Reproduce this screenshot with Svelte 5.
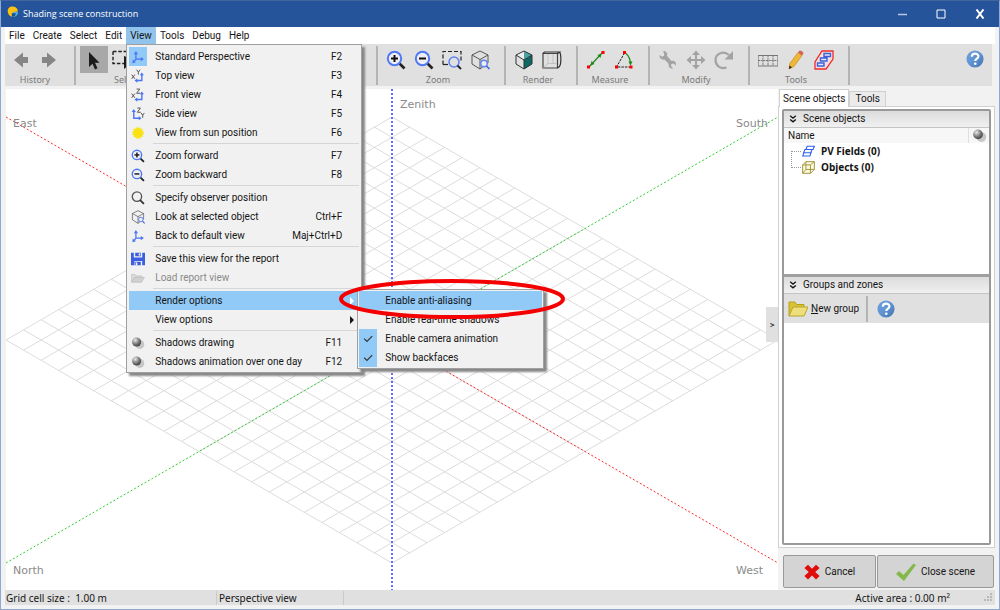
<script>
  const menuTitles = ['File', 'Create', 'Select', 'Edit', 'View', 'Tools', 'Debug', 'Help'];

  const viewMenu = [
    { label: 'Standard Perspective', key: 'F2', icon: 'axes', checked: true },
    { label: 'Top view', key: 'F3', icon: 'topView' },
    { label: 'Front view', key: 'F4', icon: 'frontView' },
    { label: 'Side view', key: 'F5', icon: 'sideView' },
    { label: 'View from sun position', key: 'F6', icon: 'sun' },
    null,
    { label: 'Zoom forward', key: 'F7', icon: 'zoomIn' },
    { label: 'Zoom backward', key: 'F8', icon: 'zoomOut' },
    null,
    { label: 'Specify observer position', icon: 'lens' },
    { label: 'Look at selected object', key: 'Ctrl+F', icon: 'cubeZoom' },
    { label: 'Back to default view', key: 'Maj+Ctrl+D', icon: 'axes' },
    null,
    { label: 'Save this view for the report', icon: 'disk' },
    { label: 'Load report view', icon: 'openGrey', disabled: true },
    null,
    { label: 'Render options', sub: true, active: true },
    { label: 'View options', sub: true },
    null,
    { label: 'Shadows drawing', key: 'F11', icon: 'ball' },
    { label: 'Shadows animation over one day', key: 'F12', icon: 'ball' }
  ];

  const renderMenu = [
    { label: 'Enable anti-aliasing', active: true },
    { label: 'Enable real-time shadows' },
    { label: 'Enable camera animation', checked: true, icon: 'check' },
    { label: 'Show backfaces', checked: true, icon: 'check' }
  ];

  const rightGroups = [
    { label: 'Zoom', tools: [['zoomIn', 'Zoom forward'], ['zoomOut', 'Zoom backward'], ['zoomArea', 'Zoom on area'], ['cubeZoom', 'Zoom on object']] },
    { label: 'Render', tools: [['cubeSolid', 'Solid rendering'], ['cubeWire', 'Wire rendering']] },
    { label: 'Measure', tools: [['distance', 'Distance'], ['angle', 'Angle']] },
    { label: 'Modify', tools: [['wrench', 'Edit'], ['move', 'Move'], ['rotate', 'Rotate']] },
    { label: 'Tools', tools: [['grid', 'Grid'], ['pencil', 'Draw'], ['zone', 'Zone']] }
  ];

  // Ground grid: 22 x 22 cells seen in isometric projection.
  const cells = 22;
  const cx = 386;
  const cy = 251;
  const hw = 386;
  const hh = 223;
  const gridLines = Array.from({ length: cells + 1 }, (_, i) => {
    const t = i / cells;
    return [
      { x1: cx - hw + hw * t, y1: cy - hh * t, x2: cx + hw * t, y2: cy + hh - hh * t },
      { x1: cx - hw + hw * t, y1: cy + hh * t, x2: cx + hw * t, y2: cy - hh + hh * t }
    ];
  }).flat();
</script>

{#snippet icon(name)}
  <svg class="icon" viewBox="0 0 20 20" fill="none" aria-hidden="true">
    {#if name === 'axes'}
      <path d="M7 4v9h9M7 13l-3 4" stroke="#4a76f5" stroke-width="1.8" />
      <path d="M4 6 7 1.500 10 6zM14 10l4.500 3-4.500 3zM2.500 13.500l4.500 4-5 1.500z" fill="#4a76f5" />
    {:else if name === 'topView' || name === 'frontView'}
      <path d="M7 16.500h8.500V8" stroke="#4a76f5" stroke-width="2" />
      <path d="M9 13.500 5 16.500l4 3zM12.500 9l3-4 3 4z" fill="#4a76f5" />
      <path d="m1 8 4.500 6M5.500 8 1 14" stroke="#555" stroke-width="1.400" />
      {#if name === 'topView'}
        <path d="m8 1 2.500 3.500L13 1M10.500 4.500V8" stroke="#555" stroke-width="1.400" />
      {:else}
        <path d="M8 1.500h4.500L8 7.500h5" stroke="#555" stroke-width="1.400" />
      {/if}
    {:else if name === 'sideView'}
      <path d="M4 6v10h8" stroke="#4a76f5" stroke-width="2" />
      <path d="m1 7 3-4 3 4zM11 13l4 3-4 3z" fill="#4a76f5" />
      <path d="M9 1.500h4.500L9 7.500h5M14.500 8.500l2.200 3.500L19 8.500M16.700 12v3.500" stroke="#555" stroke-width="1.400" />
    {:else if name === 'sun'}
      <circle cx="10" cy="10" r="7" fill="#f9e211" />
      <circle cx="10" cy="10" r="7.500" stroke="#f9e211" stroke-width="1.600" stroke-dasharray="2.400 1.500" />
    {:else if name === 'zoomIn' || name === 'zoomOut'}
      <path d="m13 13 5.500 5.500" stroke="#222" stroke-width="2.600" />
      <circle cx="8.500" cy="8.500" r="6.700" stroke="#4f78f3" stroke-width="2" fill="#eeeef4" />
      <path d="M5 8.500h7" stroke="#111" stroke-width="2" />
      {#if name === 'zoomIn'}<path d="M8.500 5v7" stroke="#111" stroke-width="2" />{/if}
    {:else if name === 'zoomArea'}
      <path d="M1 14.500V1.500h18v9" stroke="#222" stroke-width="1.200" stroke-dasharray="4 2" />
      <path d="M1 14.500h5" stroke="#222" stroke-width="1.200" />
      <circle cx="12" cy="12" r="5" stroke="#5f84f3" stroke-width="1.500" />
      <path d="m15.500 15.500 3.500 3.500" stroke="#222" stroke-width="1.800" />
    {:else if name === 'lens'}
      <circle cx="8.500" cy="8" r="6.700" stroke="#555" stroke-width="1.900" />
      <path d="m13 13 5.500 5.500" stroke="#333" stroke-width="2.600" />
    {:else if name === 'cubeZoom'}
      <path d="m10 1 8 4v8l-8 6-8-5V5zM2 5l8 4.500L18 5M10 9.500V19" stroke="#555" stroke-width="1" />
      <circle cx="14" cy="13.500" r="3.200" stroke="#5f84f3" stroke-width="1.400" fill="#eee" />
      <path d="m16.500 16 3 3" stroke="#3c5fcf" stroke-width="1.500" />
    {:else if name === 'cubeSolid'}
      <path d="m10 1 8 4-8 5z" fill="#4aa3a0" />
      <path d="m18 5v9l-8 5V10z" fill="#0b6864" />
      <path d="M10 1 2 5l8 5V1z" fill="#eee" />
      <path d="m10 1 8 4v9l-8 5-8-5V5zM2 5l8 5 8-5M10 10v9" stroke="#333" stroke-width="1" />
    {:else if name === 'cubeWire'}
      <path d="M1 3.500h14.500V18H1z" stroke="#444" stroke-width="1.200" />
      <path d="m1 3.500 1.500-1.500h15l-2 1.500M17.500 2c1.800 2 1.800 12 0 14.500L15.500 18" stroke="#333" stroke-width="1.200" />
      <path d="M6 4v9.500h9M1.500 17.500 6 13.500M11 4v9.500" stroke="#c2c2c2" />
    {:else if name === 'distance'}
      <path d="m3 17 14-15" stroke="#178a17" stroke-width="1.200" />
      <path d="m5.500 11 3 3-4 1.500zM14.500 8l-3-3 4-1.500z" fill="#178a17" />
      <path d="M1 15.500h3v3H1zM15.500 1h3v3h-3z" fill="#f00" />
    {:else if name === 'angle'}
      <path d="M10.500 3 2.500 17h14" stroke="#222" stroke-dasharray="2.500 1" />
      <path d="M12 3.500c3.500 3 4.500 7 4.500 11" stroke="#178a17" stroke-width="1.200" />
      <path d="m14.500 11.500 2 4 2-4z" fill="#178a17" />
      <path d="M9 1h3v3H9zM1 15.500h3v3H1zM15.500 15.500h3v3h-3z" fill="#f00" />
    {:else if name === 'wrench'}
      <path d="M5 1c3-.5 5 2 4 5l4.500 5c3-1 5 1.500 4.500 4.500l-2.500-2-2.300.8v2.300l2.200 1.900c-3 .5-5.500-1.500-4.600-4.500L6.500 9.500C3.500 10.300 1 8 1.500 5l2.500 1.700 2.100-.9V3.500z" fill="#a3a3a3" />
    {:else if name === 'move'}
      <path d="M10 3v14M3 10h14" stroke="#a3a3a3" stroke-width="2" />
      <path d="m6 5 4-4.500L14 5zM6 15l4 4.500 4-4.500zM5 6 .5 10 5 14zM15 6l4.500 4-4.500 4z" fill="#a3a3a3" />
    {:else if name === 'rotate'}
      <path d="M12.500 17.500C6.500 19.500 1.500 15.500 1.500 10 1.500 3 10 .5 15 5" stroke="#a3a3a3" stroke-width="2.200" />
      <path d="M19 1v8.500h-8.500z" fill="#a3a3a3" />
    {:else if name === 'grid'}
      <path d="M0 5.500h20v10.500H0z" stroke="#777" stroke-width="1.200" />
      <path d="M0 10.500h20M5 5v11M10 5v11M15 5v11" stroke="#777" stroke-dasharray="2 .7" />
    {:else if name === 'pencil'}
      <path d="m3 19 .8-5.500L12 2.500l4 3L8 16.500z" fill="#eeb73a" stroke="#c78a20" stroke-width=".7" />
      <path d="m12 2.500 1.500-2c2 0 3.500 1 4 3L16 5.500z" fill="#d6634f" />
      <path d="m3 19 .5-3.500 2.500 1.700z" fill="#222" />
    {:else if name === 'zone'}
      <path d="M8 1h11v8l-7 10H1v-7z" fill="#f6dede" stroke="#ee2b2b" stroke-width="1.300" />
      <path d="M10 3.500h6.500v3H10zM6.500 8H13v3H6.500zM3.500 13H10v3H3.500z" fill="#e4e8fb" stroke="#3d61d8" stroke-width="1.400" />
    {:else if name === 'disk'}
      <path d="M0 1h4v7h12V1h4v18h-4v-6H5v6H0z" fill="#3b5fe0" />
      <path d="M6 1h8v5H6zM6 14h8v5H6z" fill="#3b5fe0" />
      <path d="M11 2h2v3h-2zM7 15h2v4H7z" fill="#fff" />
    {:else if name === 'openGrey'}
      <path d="M1 16V5h5l1.500 2H15v3" fill="#ddd" stroke="#bbb" />
      <path d="m1 16 4-7h14l-4 7z" fill="#d2d2d2" stroke="#b8b8b8" />
    {:else if name === 'folder'}
      <path d="M1 17V3h6l1.500 2.500H16V8" fill="#d9c233" stroke="#b59f1c" />
      <path d="M1 17 5 8h15l-4 9z" fill="#ede07c" stroke="#b8a52a" />
    {:else if name === 'ball'}
      <circle cx="12.500" cy="12" r="6.500" fill="#c6c6c6" />
      <circle cx="8" cy="8.500" r="6.500" fill="url(#ballShade)" />
    {:else if name === 'check'}
      <path d="m4.500 9.500 4 4 7.500-7.500" stroke="#333" stroke-width="1.700" />
    {:else if name === 'help'}
      <circle cx="10" cy="10" r="9.500" fill="url(#helpShade)" />
      <path d="M6.500 7.500C6.500 2.800 13.800 3 13.800 7.200c0 2.300-3.500 2.500-3.500 5" stroke="#fff" stroke-width="2.400" />
      <circle cx="10.300" cy="15.300" r="1.500" fill="#fff" />
    {:else if name === 'arrowLeft'}
      <path d="m3 10 9-7.500V7h5v6h-5v4.500z" fill="#868686" />
    {:else if name === 'arrowRight'}
      <path d="m17 10-9-7.500V7H3v6h5v4.500z" fill="#868686" />
    {:else if name === 'pointer'}
      <path d="M5 2v15l3.500-3.200 2.500 5.700 2.500-1.200-2.500-5.500h4.500z" fill="#1c1c1c" />
    {:else if name === 'rectSelect'}
      <path d="M1 1.500h18M1 1.500v12h11" stroke="#222" stroke-width="1.400" stroke-dasharray="3.500 1.800" />
      <path d="M12 6v13l3-2.500L17 20h3V9z" fill="#1c1c1c" />
    {:else if name === 'pv'}
      <path d="M8 2h11l-2 5H6zM4.500 7h11l-2 5h-11zM3 12h11l-2 5H1z" stroke="#2d62e8" stroke-width="1.700" fill="#fff" />
    {:else if name === 'box'}
      <path d="M1 6h12v13H1zM6 1h13v12H6zM1 6l5-5M13 6l6-5M13 19l6-6M1 19l5-6" stroke="#a4953a" stroke-width="1.500" fill="#f7f3c4" fill-opacity=".5" />
    {:else if name === 'chevrons'}
      <path d="m3 2 7 6 7-6M3 11l7 6 7-6" stroke="#111" stroke-width="3.400" />
    {:else if name === 'cross'}
      <path d="m5 1 5 5 5-5 4.500 4-5.500 5 5.500 5-4.500 4.500-5-5-5 5L.5 15 6 10 .5 5z" fill="#e00b0b" />
    {:else if name === 'tick'}
      <path d="m0 12 3-3 4.500 4L17.500 1.500 20 3 8 19z" fill="#84b84c" />
    {:else if name === 'logo'}
      <path d="M2 12C-1 6 4 0 10 1c5 .5 8 4 8 8l-8 1-2 8c-3-1-5-3-6-6z" fill="#ffc20e" />
      <path d="M10 10h8c1 3-2 8-7 8-2 0-3-.5-3-1z" fill="#55b4e0" />
      <path d="M8 12h7l-2 5-5 1z" fill="#1d4f8f" />
    {/if}
  </svg>
{/snippet}

{#snippet menuList(items, cls)}
  <ul class="popup {cls}">
    {#each items as item}
      {#if item === null}
        <li class="sep"></li>
      {:else}
        <li>
          <button class="entry" class:active={item.active} disabled={item.disabled}>
            <span class="gutter" class:checked={item.checked}>{#if item.icon}{@render icon(item.icon)}{/if}</span>
            <span class="name">{item.label}</span>
            {#if item.key}<span class="key">{item.key}</span>{/if}
            {#if item.sub}<svg class="more" viewBox="0 0 4 8" aria-hidden="true"><path d="m0 0 4 4-4 4z" fill="currentColor" /></svg>{/if}
          </button>
        </li>
      {/if}
    {/each}
  </ul>
{/snippet}

<svg class="defs" aria-hidden="true">
  <defs>
    <radialGradient id="ballShade" cx=".35" cy=".3" r=".75">
      <stop offset="0" stop-color="#e8e8e8" />
      <stop offset=".6" stop-color="#777" />
      <stop offset="1" stop-color="#3c3c3c" />
    </radialGradient>
    <linearGradient id="helpShade" x1="0" y1="0" x2="1" y2="1">
      <stop offset="0" stop-color="#6fa0dc" />
      <stop offset=".5" stop-color="#5f93d2" />
      <stop offset="1" stop-color="#4472b0" />
    </linearGradient>
  </defs>
</svg>

<div class="window">
  <header class="titlebar">
    {@render icon('logo')}
    <h1>Shading scene construction</h1>
    <div class="caption">
      <button aria-label="Minimize"><svg viewBox="0 0 10 10"><path d="M1 5.500h9" stroke="#b9c8e2" stroke-width="1.500" /></svg></button>
      <button aria-label="Maximize"><svg viewBox="0 0 10 10"><path d="M1 1h8v8H1z" stroke="#fff" fill="none" /></svg></button>
      <button aria-label="Close"><svg viewBox="0 0 10 10"><path d="m1.500.5 7 9M8.500.5l-7 9" stroke="#fff" stroke-width="2" /></svg></button>
    </div>
  </header>

  <nav class="menubar">
    {#each menuTitles as title}
      <div class="menu">
        <button class:open={title === 'View'}>{title}</button>
        {#if title === 'View'}
          {@render menuList(viewMenu, 'main')}
          {@render menuList(renderMenu, 'side')}
          <svg class="mark" viewBox="0 0 228 42" aria-hidden="true"><ellipse cx="114" cy="21" rx="111" ry="18" fill="none" stroke="#f50000" stroke-width="4" /></svg>
        {/if}
      </div>
    {/each}
  </nav>

  <div class="toolbar">
    <section class="group history">
      <div class="tools">
        <button aria-label="Undo">{@render icon('arrowLeft')}</button>
        <button aria-label="Redo">{@render icon('arrowRight')}</button>
      </div>
      <span class="caption-text">History</span>
    </section>
    <section class="group select">
      <div class="tools">
        <button class="pressed" aria-label="Pointer">{@render icon('pointer')}</button>
        <button aria-label="Rectangle">{@render icon('rectSelect')}</button>
      </div>
      <span class="caption-text">Select</span>
    </section>
    {#each rightGroups as group}
      <section class="group">
        <div class="tools">
          {#each group.tools as [name, title]}
            <button aria-label={title}>{@render icon(name)}</button>
          {/each}
        </div>
        <span class="caption-text">{group.label}</span>
      </section>
    {/each}
    <button class="help" aria-label="Help">{@render icon('help')}</button>
  </div>

  <main>
    <div class="scene">
      <svg viewBox="0 0 772 501" preserveAspectRatio="xMidYMid meet">
        {#each gridLines as line}
          <line {...line} stroke="#dcdcdc" />
        {/each}
        <line x1="0" y1="28" x2="772" y2="474" stroke="#ff2a2a" stroke-dasharray="2 2" />
        <line x1="0" y1="474" x2="772" y2="28" stroke="#2fcf2f" stroke-dasharray="2 2" />
        <line x1="386" y1="0" x2="386" y2="501" stroke="#6a6aff" stroke-width="2" stroke-dasharray="2 2" />
        <text x="394" y="19">Zenith</text>
        <text x="7" y="38">East</text>
        <text x="730" y="38">South</text>
        <text x="7" y="485">North</text>
        <text x="730" y="485">West</text>
      </svg>
      <button class="handle" aria-label="Hide side panel">&gt;</button>
    </div>

    <aside>
      <div class="tabs" role="tablist">
        <button class="tab current" role="tab" aria-selected="true">Scene objects</button>
        <button class="tab" role="tab" aria-selected="false">Tools</button>
      </div>
      <div class="page">
        <div class="boxes">
          <section class="box objects">
            <h2>{@render icon('chevrons')}Scene objects</h2>
            <div class="columns"><span>Name</span><span class="shade">{@render icon('ball')}</span></div>
            <ul class="tree">
              <li>{@render icon('pv')}PV Fields (0)</li>
              <li>{@render icon('box')}Objects (0)</li>
            </ul>
          </section>
          <section class="box groups">
            <h2>{@render icon('chevrons')}Groups and zones</h2>
            <div class="grouptools">
              <button class="new">{@render icon('folder')}<span><u>N</u>ew group</span></button>
              <button class="ask" aria-label="Help on groups">{@render icon('help')}</button>
            </div>
          </section>
        </div>
      </div>
      <div class="actions">
        <button class="cancel">{@render icon('cross')}Cancel</button>
        <button class="close">{@render icon('tick')}Close scene</button>
      </div>
    </aside>
  </main>

  <footer>
    <span class="cell">Grid cell size :&nbsp; 1.00 m</span>
    <span class="mode">Perspective view</span>
    <span class="area">Active area : 0.00 m²</span>
    <svg class="grip" viewBox="0 0 9 9" aria-hidden="true"><path d="M6 0h2v2H6zM3 3h2v2H3zM6 3h2v2H6zM0 6h2v2H0zM3 6h2v2H3zM6 6h2v2H6z" fill="#b8b8b8" /></svg>
  </footer>
</div>

<style>
  :global(body) {
    margin: 0;
  }

  .window {
    --ui: Roboto, "Open Sans", sans-serif;
    --wide: "Noto Sans", "Open Sans", sans-serif;
    box-sizing: border-box;
    min-height: 100vh;
    display: flex;
    flex-direction: column;
    border: 1px solid #8fa9d2;
    border-top-color: #41659c;
    background: #f2f2f2;
    color: #151515;
    font: 10px/14px var(--ui);
  }

  button {
    margin: 0;
    padding: 0;
    border: 0;
    background: none;
    color: inherit;
    font: inherit;
  }

  ul {
    margin: 0;
    padding: 0;
    list-style: none;
  }

  h1,
  h2 {
    margin: 0;
    font: inherit;
  }

  .defs {
    position: absolute;
    width: 0;
    height: 0;
  }

  .icon {
    display: block;
    flex: none;
    width: 20px;
    height: 20px;
  }

  .titlebar {
    display: flex;
    align-items: center;
    height: 26px;
    padding-left: 6px;
    background: #25549b;
    color: #fff;
  }

  .titlebar .icon {
    width: 12px;
    height: 12px;
    margin-bottom: 4px;
  }

  .titlebar h1 {
    padding-left: 4px;
    font: 9px/14px "Open Sans", sans-serif;
  }

  .caption {
    display: flex;
    margin-left: auto;
  }

  .caption button {
    display: grid;
    place-items: center;
    width: 39px;
    height: 26px;
  }

  .caption svg {
    width: 10px;
    height: 10px;
  }

  .menubar {
    display: flex;
    height: 17px;
    margin: 0 4px;
    background: #fff;
  }

  .menu {
    position: relative;
  }

  .menu > button {
    height: 17px;
    padding: 0 4px;
    line-height: 17px;
  }

  .menu > .open {
    background: #91c3ec;
  }

  .popup {
    position: absolute;
    z-index: 2;
    box-sizing: border-box;
    border: 1px solid #a0a0a0;
    background: #f1f1f1;
    box-shadow: 3px 3px 2px #888;
  }

  .main {
    top: 17px;
    left: 0;
    width: 236px;
    padding: 2px 2px 1px;
  }

  .side {
    top: 262px;
    left: 231px;
    width: 187px;
    padding: 1px;
  }

  .entry {
    display: flex;
    align-items: center;
    width: 100%;
    height: 19px;
    padding-right: 17px;
    text-align: left;
    white-space: nowrap;
  }

  .entry:disabled {
    color: #8a8a8a;
  }

  .entry.active {
    background: #91c9f7;
  }

  .gutter {
    display: grid;
    place-items: center;
    width: 18px;
    height: 19px;
    margin-right: 8px;
  }

  .gutter .icon {
    width: 14px;
    height: 14px;
  }

  .checked {
    background: #91c9f7;
  }

  .key {
    margin-left: auto;
  }

  .more {
    width: 4px;
    height: 8px;
    margin: 0 -12px 0 auto;
  }

  .active .more {
    color: #fff;
  }

  .sep {
    height: 1px;
    margin: 1px 0 2px 24px;
    background: #d6d6d6;
  }

  .mark {
    position: absolute;
    z-index: 3;
    top: 251px;
    left: 212px;
    width: 228px;
    height: 42px;
    pointer-events: none;
  }

  .toolbar {
    display: flex;
    height: 42px;
    margin: 0 7px 3px 4px;
    background: #e0e0e0;
  }

  .group {
    display: flex;
    flex-direction: column;
    align-items: center;
    margin: 2px 0 1px;
    padding: 0 10px 0 4px;
    border-right: 2px solid #b4b4b4;
    color: #7a7a7a;
  }

  .group.history {
    padding: 0 11px 0 2px;
  }

  .group.select {
    align-items: flex-start;
    width: 286px;
  }

  .group.select .caption-text {
    padding-left: 34px;
  }

  .tools {
    display: flex;
  }

  .tools button {
    display: grid;
    place-items: center;
    width: 28px;
    height: 27px;
  }

  .tools .pressed {
    background: #a8a8a8;
  }

  .caption-text {
    font: 9px/13px var(--wide);
  }

  .help {
    align-self: flex-start;
    margin: 6px 8px 0 auto;
  }

  .help .icon {
    width: 18px;
    height: 18px;
  }

  main {
    display: flex;
    flex: 1;
    padding: 0 4px 0 5px;
  }

  .scene {
    position: relative;
    display: flex;
    flex: 1;
    background: #fff;
  }

  .scene > svg {
    flex: 1;
    width: 100%;
    height: 100%;
  }

  .scene text {
    fill: #8a8a8a;
    font: 11px "DejaVu Sans", sans-serif;
  }

  .handle {
    position: absolute;
    right: 0;
    top: 218px;
    width: 12px;
    height: 35px;
    background: #e0e0e0;
    font-size: 9px;
  }

  aside {
    display: flex;
    flex-direction: column;
    width: 217px;
  }

  .tabs {
    display: flex;
    align-items: flex-end;
    height: 17px;
    padding-left: 1px;
  }

  .tab {
    height: 15px;
    padding: 0 5px;
    border: 1px solid #d0d0d0;
    border-bottom: 0;
    background: #ebebeb;
  }

  .current {
    z-index: 1;
    height: 18px;
    margin-bottom: -1px;
    padding: 0 3px;
    background: #fff;
  }

  .page {
    display: flex;
    flex: 1;
    padding: 2px 3px;
    border: 1px solid #d0d0d0;
    background: #fff;
  }

  .boxes {
    display: flex;
    flex: 1;
    flex-direction: column;
    border: 2px solid #999;
    border-radius: 2px;
  }

  .box h2 {
    display: flex;
    align-items: center;
    gap: 6px;
    height: 16px;
    padding-left: 5px;
    border-bottom: 1px solid #c4c4c4;
    background: linear-gradient(#dcdcdc, #f0f0f0);
  }

  .box h2 .icon {
    width: 8px;
    height: 8px;
  }

  .objects {
    flex: 163;
    border-bottom: 3px solid #a0a0a0;
  }

  .groups {
    flex: 265;
  }

  .columns {
    display: flex;
    align-items: center;
    justify-content: space-between;
    height: 15px;
    padding-left: 4px;
    background: #f7f7f7;
  }

  .shade {
    display: grid;
    place-items: center;
    width: 20px;
    border-left: 1px solid #e0e0e0;
  }

  .shade .icon {
    width: 15px;
    height: 15px;
  }

  .tree {
    position: relative;
    padding-left: 18px;
    font-family: var(--wide);
    font-weight: 700;
  }

  .tree::before {
    position: absolute;
    top: 8px;
    left: 7px;
    width: 9px;
    height: 15px;
    border: 1px dotted #999;
    border-right: 0;
    content: "";
  }

  .tree li {
    display: flex;
    align-items: center;
    gap: 6px;
    height: 16px;
  }

  .tree .icon {
    width: 13px;
    height: 13px;
  }

  .grouptools {
    display: flex;
    align-items: center;
    height: 29px;
    background: #e0e0e0;
  }

  .new {
    display: flex;
    align-items: center;
    gap: 3px;
    height: 26px;
    padding: 0 7px 0 4px;
    border-right: 2px solid #b4b4b4;
  }

  .ask {
    padding-left: 9px;
  }

  .ask .icon {
    width: 18px;
    height: 18px;
  }

  .actions {
    display: flex;
    gap: 1px;
    padding: 7px 1px 2px 5px;
  }

  .actions button {
    display: flex;
    flex: 1;
    align-items: center;
    justify-content: center;
    gap: 5px;
    height: 33px;
    border: 1px solid #999;
    border-radius: 2px;
    background: #d4d4d4;
  }

  .actions .cancel {
    flex: 0 1 93px;
  }

  .actions .cancel .icon {
    width: 16px;
    height: 16px;
  }

  footer {
    display: flex;
    align-items: center;
    height: 15px;
    margin: 0 4px 4px;
    background: #e0e0e0;
    font-family: var(--wide);
  }

  footer span {
    box-sizing: border-box;
  }

  .cell {
    width: 212px;
    padding-left: 1px;
    border-right: 1px solid #cacaca;
  }

  .mode {
    width: 127px;
    padding-left: 2px;
    border-right: 1px solid #cacaca;
  }

  .area {
    margin-left: auto;
    padding-right: 34px;
  }

  .grip {
    width: 9px;
    height: 9px;
    margin-right: 2px;
  }
</style>
